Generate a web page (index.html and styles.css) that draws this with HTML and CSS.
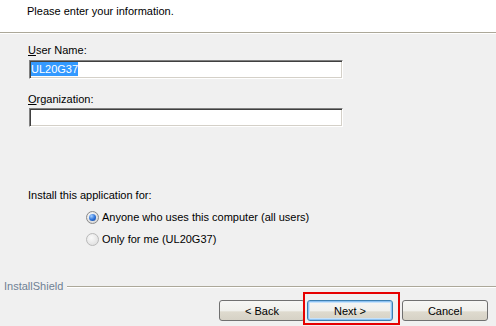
FILE: index.html
```html
<!DOCTYPE html>
<html lang="en">

<head>
    <meta charset="UTF-8">
    <meta name="viewport" content="width=device-width, initial-scale=1.0">
    <title>Customer Information</title>
    <link rel="stylesheet" href="styles.css">
</head>

<body>
    <div class="dialog">
        <!-- header -->
        <div class="header">
            <p class="subtitle">Please enter your information.</p>
        </div>

        <div class="content">
            <!-- user name -->
            <div class="field">
                <label class="field-label"><u>U</u>ser Name:</label>
                <div class="textbox"><span class="selected">UL20G37</span></div>
            </div>

            <!-- organization -->
            <div class="field field-org">
                <label class="field-label"><u>O</u>rganization:</label>
                <div class="textbox"></div>
            </div>

            <!-- install for -->
            <div class="install-for">
                <p class="install-label">Install this application for:</p>
                <div class="options">
                    <div class="option"><span class="radio checked"></span>Anyone who uses this computer (all users)</div>
                    <div class="option"><span class="radio"></span>Only for me (UL20G37)</div>
                </div>
            </div>
        </div>

        <!-- footer -->
        <div class="footer">
            <div class="brand">
                <span class="brand-name">InstallShield</span>
                <div class="etched"></div>
            </div>
            <div class="buttons">
                <button class="btn">&lt; Back</button>
                <div class="focus-wrap">
                    <button class="btn btn-default">Next &gt;</button>
                    <span class="highlight"></span>
                </div>
                <button class="btn btn-cancel">Cancel</button>
            </div>
        </div>
    </div>
</body>

</html>
```

FILE: styles.css
```css
body {
    margin: 0;
    font-family: "Liberation Sans", Arial, sans-serif;
    font-size: 11px;
    color: #000;
}

.dialog {
    width: 496px;
    height: 326px;
    display: flex;
    flex-direction: column;
    background: #f0f0f0;
    overflow: hidden;
}

.header {
    height: 33px;
    box-sizing: border-box;
    padding: 5px 0 0 27px;
    background: #fff;
    border-bottom: 1px solid #aca899;
    box-shadow: 0 1px 0 #fff;
    flex-shrink: 0;
}

.subtitle {
    margin: 0;
    line-height: 13px;
}

.content {
    padding-left: 28px;
}

.field {
    margin-top: 11px;
}

.field-org {
    margin-top: 14px;
}

.field-label {
    display: block;
    line-height: 13px;
}

.textbox {
    width: 314px;
    height: 19px;
    box-sizing: border-box;
    margin: 3px 0 0 1px;
    background: #fff;
    border: 1px solid;
    border-color: #808080 #fff #fff #808080;
    box-shadow: inset 1px 1px 0 #404040, inset -1px -1px 0 #d4d0c8;
    padding: 1px 0 0 1px;
    line-height: 14px;
}

.field-org .textbox {
    margin-top: 2px;
}

.selected {
    display: inline-block;
    background: #3399ff;
    color: #fff;
    line-height: 14px;
}

.install-for {
    margin-top: 62px;
}

.install-label {
    margin: 0;
    line-height: 13px;
}

.options {
    margin: 7px 0 0 58px;
    display: flex;
    flex-direction: column;
    gap: 6px;
}

.option {
    display: flex;
    align-items: center;
    gap: 3px;
    height: 16px;
}

.radio {
    position: relative;
    width: 13px;
    height: 13px;
    box-sizing: border-box;
    border-radius: 50%;
    border: 1px solid #b9b9b9;
    background: radial-gradient(circle at 40% 35%, #fafafa, #e2e2e2 75%);
    flex-shrink: 0;
}

.radio.checked {
    border-color: #8a8a8a;
    background: radial-gradient(circle at 40% 35%, #fff, #d6d6d6 80%);
}

.radio.checked::after {
    content: "";
    position: absolute;
    left: 2px;
    top: 2px;
    width: 7px;
    height: 7px;
    border-radius: 50%;
    background: radial-gradient(circle at 35% 30%, #a6d0ff, #2a6fd6 55%, #123f8f);
}

.footer {
    margin-top: auto;
    flex-shrink: 0;
}

.brand {
    display: flex;
    align-items: center;
    padding-left: 4px;
    height: 13px;
}

.brand-name {
    color: #6f8194;
    line-height: 13px;
}

.etched {
    flex: 1;
    margin-left: 4px;
    border-top: 1px solid #aca899;
    border-bottom: 1px solid #fff;
}

.buttons {
    display: flex;
    justify-content: flex-end;
    padding: 7px 8px 5px 0;
}

.btn {
    width: 86px;
    height: 21px;
    padding: 0;
    font-family: inherit;
    font-size: 11px;
    color: #000;
    border: 1px solid #707070;
    border-radius: 3px;
    background: linear-gradient(to bottom, #f6f6f4 0%, #f0f0ec 50%, #dedace 58%, #d6d2c6 100%);
}

.focus-wrap {
    position: relative;
    margin-left: 2px;
}

.btn-default {
    border-color: #3c7fb1;
    box-shadow: inset 0 0 0 1px #8ec2f2, inset 0 0 0 2px #c6e2fa;
}

.highlight {
    position: absolute;
    left: -4px;
    top: -8px;
    width: 97px;
    height: 33px;
    box-sizing: border-box;
    border: 2px solid #e60000;
}

.btn-cancel {
    margin-left: 9px;
}
```
